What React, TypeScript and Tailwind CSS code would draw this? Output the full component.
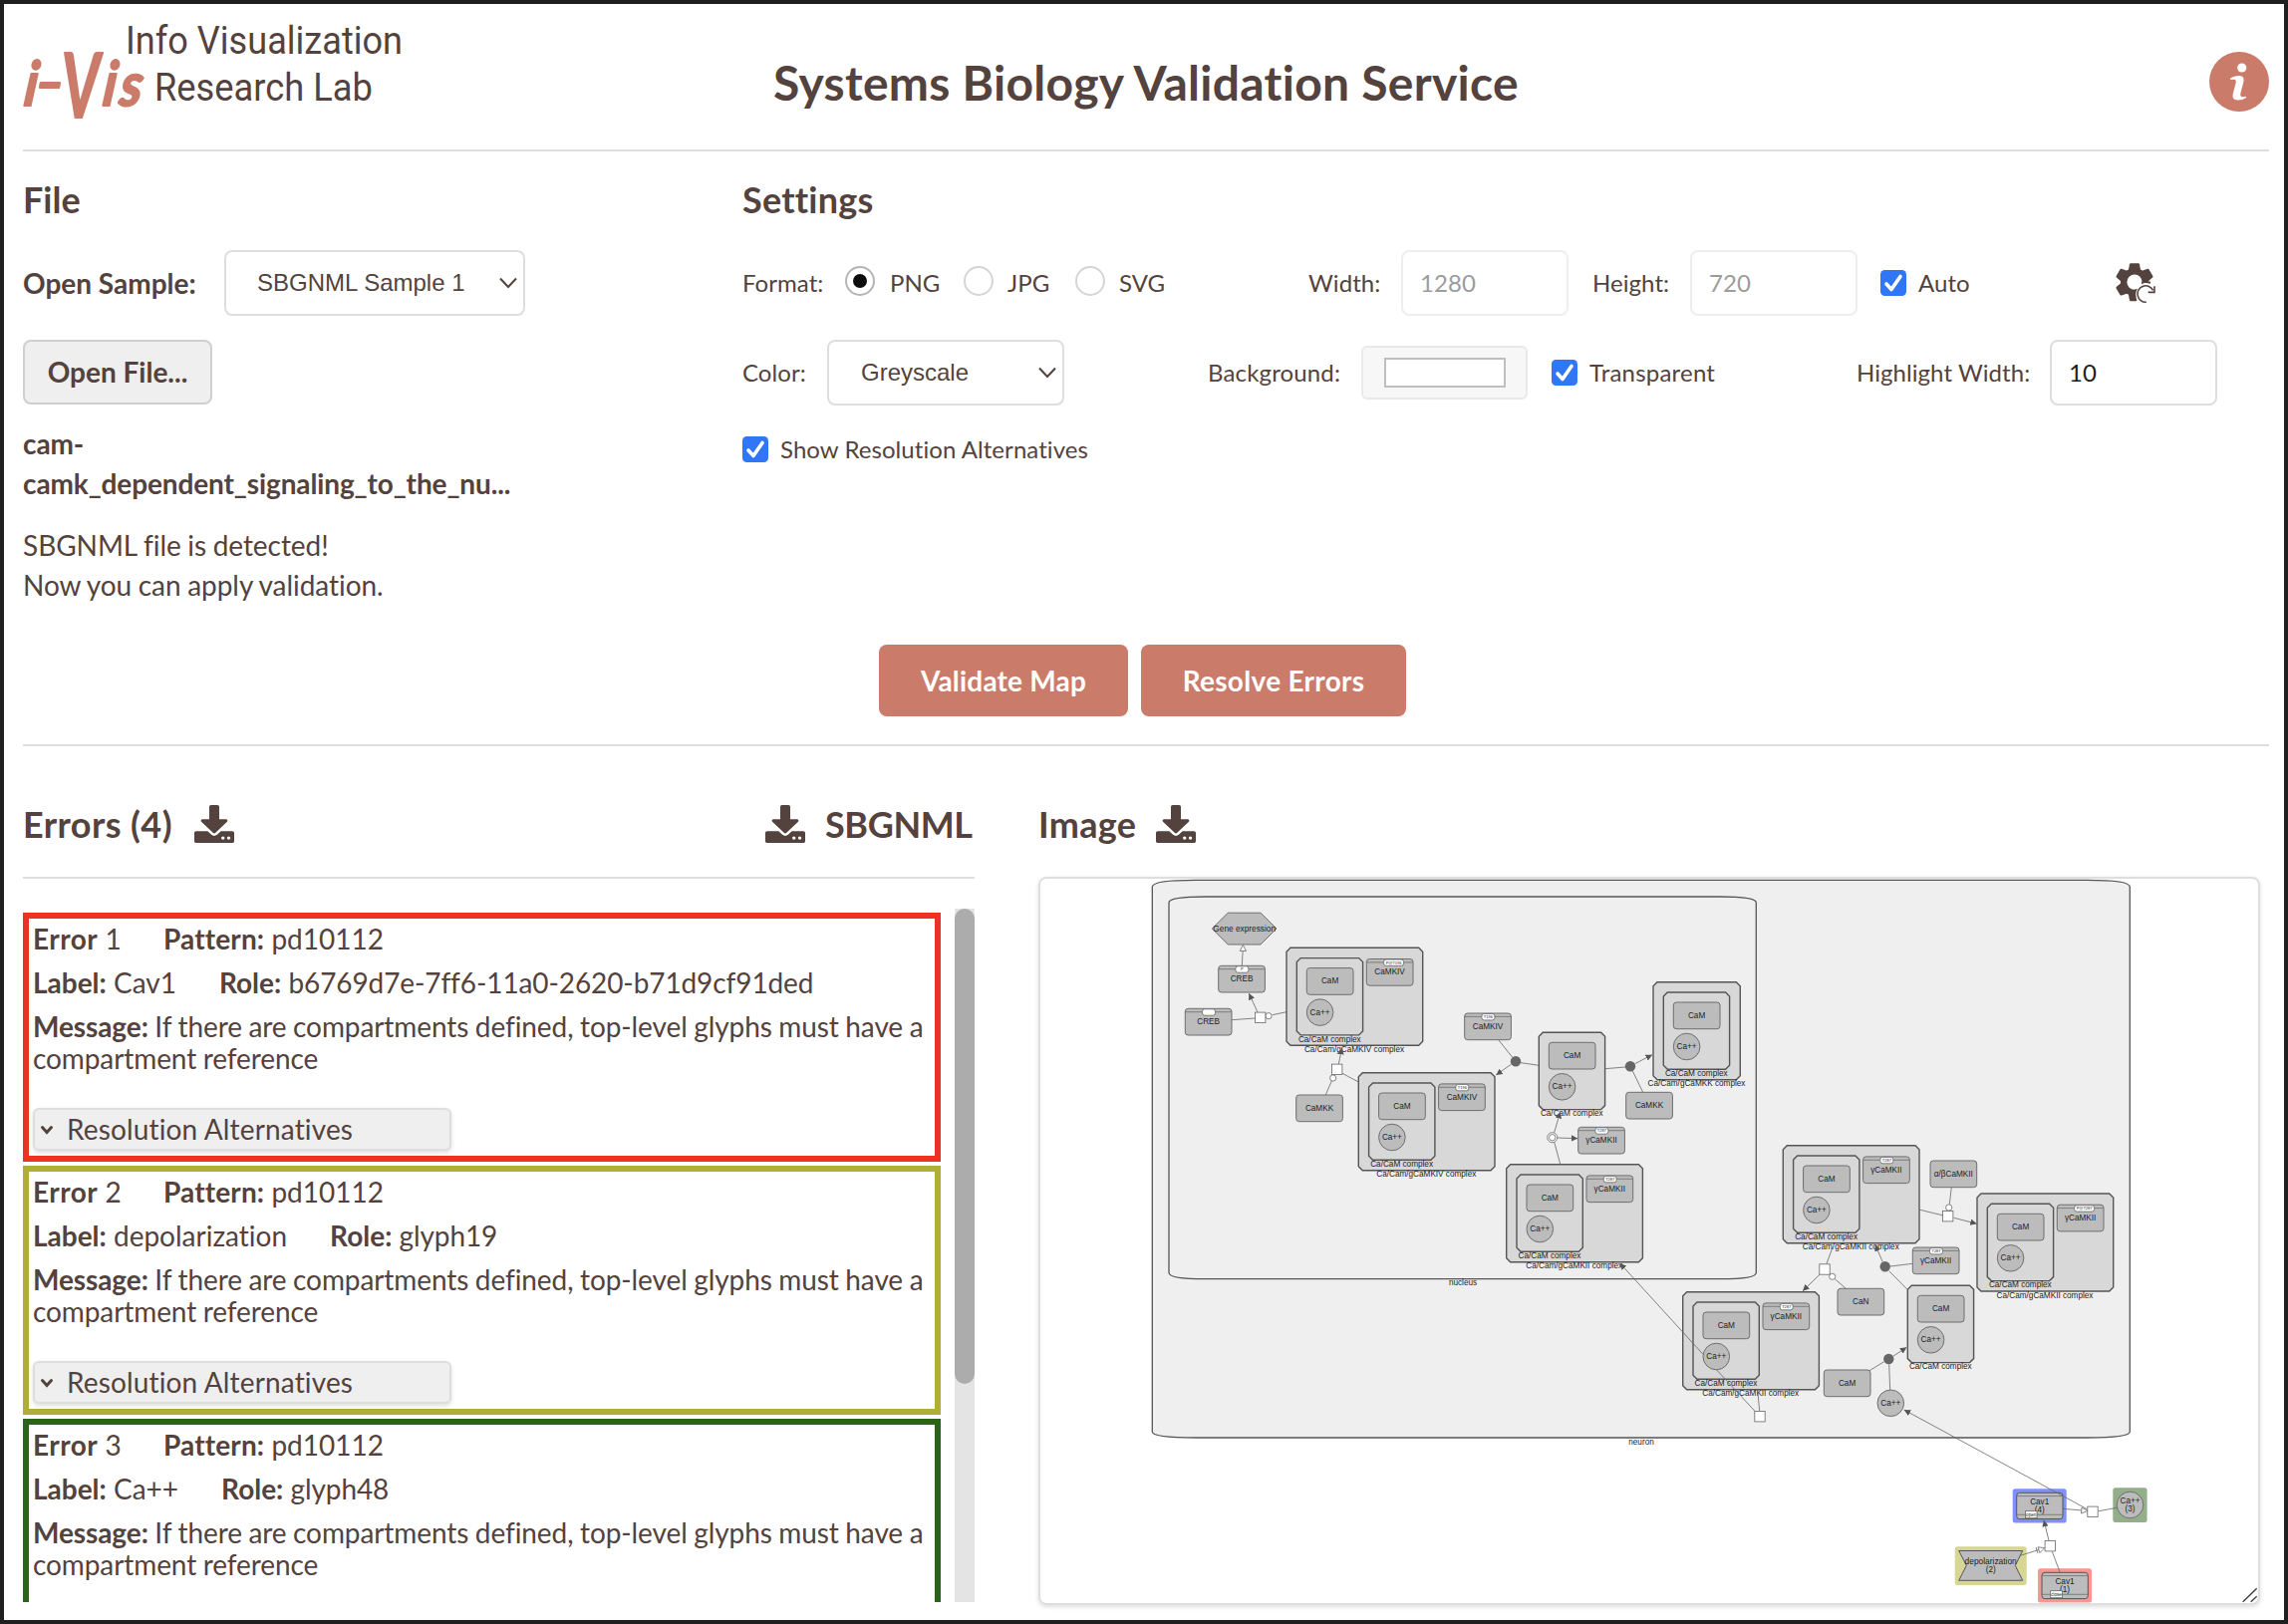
import React from "react";

const ERRORS = [
  { n: 1, label: "Cav1", role: "b6769d7e-7ff6-11a0-2620-b71d9cf91ded", border: "border-[#ea3323]" },
  { n: 2, label: "depolarization", role: "glyph19", border: "border-[#b0ae36]" },
  { n: 3, label: "Ca++", role: "glyph48", border: "border-[#2b6419]" },
];

function Logo() {
  return (
    <svg width="400" height="110" viewBox="20 16 400 110" className="block">
      <g fill="#53423d" fontFamily="Roboto, sans-serif" fontSize="38">
        <text x="126" y="53.5" textLength="278" lengthAdjust="spacingAndGlyphs">Info Visualization</text>
        <text x="155" y="101" textLength="219" lengthAdjust="spacingAndGlyphs">Research Lab</text>
      </g>
      <g fill="#ca7b6a" stroke="#ca7b6a" strokeWidth="2.2" strokeLinejoin="round" fontFamily="Lato, sans-serif" fontStyle="italic" fontWeight="700">
        <text transform="translate(23 106) scale(0.85 1) skewX(-8)" fontSize="62">i</text>
        <text transform="translate(37 101) scale(1.5 1)" fontSize="50">-</text>
        <text transform="translate(62 118) scale(0.66 1)" fontSize="89">V</text>
        <text transform="translate(102 106) scale(0.85 1) skewX(-8)" fontSize="62">i</text>
        <text transform="translate(119 106) scale(0.9 1) skewX(-8)" fontSize="60">s</text>
      </g>
    </svg>
  );
}

function InfoIcon() {
  return (
    <svg width="60" height="60" viewBox="0 0 60 60" className="block">
      <circle cx="30" cy="30" r="30" fill="#ca7b6a" />
      <circle cx="32.7" cy="16" r="4.6" fill="#fff" />
      <path
        d="M21 26.7 C23.5 25 27 24 29.8 24 C34 24 35.3 26.6 34.2 31 L31.4 41.5 C30.8 44.2 31.6 45.2 33.6 45.2 L37 44.8 L37 46 C34.5 47.8 31.5 48.6 28.5 48.5 C24.4 48.3 22.8 46 23.8 42 L26.6 31.5 C27.3 28.8 26.6 27.7 24.6 27.7 L21.1 28 Z"
        fill="#fff"
      />
    </svg>
  );
}

function GearIcon() {
  return (
    <svg width="40" height="40" viewBox="0 0 40 40" className="block">
      <g fill="#53423d">
        <circle cx="19" cy="19.2" r="14" />
        {[0, 60, 120, 180, 240, 300].map((a) => (
          <path key={a} d="M14 1.2 Q14.2 0.2 15.2 0.2 H22.8 Q23.8 0.2 24 1.2 L25.2 7.5 H12.8 Z" transform={`rotate(${a} 19 19.2)`} />
        ))}
      </g>
      <circle cx="19" cy="19.2" r="7.6" fill="#fff" />
      <path d="M19 19.2 L40 20 V40 H21 Z" fill="#fff" />
      <g fill="#53423d">
        <path d="M26.2 18.4 H35.2 L34.6 21 C32 19.6 28.6 19.6 26 21.4 Z" />
        <path d="M18.6 26.8 L22 25.8 C19.6 29.4 19.4 34 21.4 37.8 H18 Z" />
      </g>
      <path d="M30.8 39.2 A8.2 8.2 0 1 1 37.6 27.4" fill="none" stroke="#53423d" strokeWidth="1.5" />
      <path d="M39 23.2 V29.4 H32.6" fill="none" stroke="#53423d" strokeWidth="1.6" />
    </svg>
  );
}

function DownloadIcon() {
  return (
    <svg width="40" height="38" viewBox="0 0 512 512" preserveAspectRatio="none" className="block shrink-0">
      <path
        fill="#53423d"
        d="M216 0h80c13.3 0 24 10.7 24 24v168h87.7c17.8 0 26.7 21.5 14.1 34.1L269.7 378.3c-7.5 7.5-19.8 7.5-27.3 0L90.1 226.1c-12.6-12.6-3.7-34.1 14.1-34.1H192V24c0-13.3 10.7-24 24-24zm296 376v112c0 13.3-10.7 24-24 24H24c-13.3 0-24-10.7-24-24V376c0-13.3 10.7-24 24-24h146.7l49 49c20.1 20.1 52.5 20.1 72.6 0l49-49H488c13.3 0 24 10.7 24 24z"
      />
      <circle cx="368" cy="446" r="22" fill="#fff" />
      <circle cx="442" cy="446" r="22" fill="#fff" />
    </svg>
  );
}

function Select({ value, width, pad }: { value: string; width: string; pad: string }) {
  return (
    <div className={`flex h-[66px] shrink-0 items-center justify-between rounded-lg border-2 border-[#dededf] bg-white pr-[5px] ${width} ${pad}`}>
      <span className="font-['Liberation_Sans',sans-serif] text-[24px] leading-none tracking-normal whitespace-nowrap">{value}</span>
      <svg width="20" height="12" viewBox="0 0 20 12">
        <path d="M2 1.5 L10 10 L18 1.5" fill="none" stroke="#53423d" strokeWidth="2" />
      </svg>
    </div>
  );
}

function Checkbox({ gap = "" }: { gap?: string }) {
  return (
    <svg width="26" height="26" viewBox="0 0 26 26" className={`block shrink-0 ${gap}`}>
      <rect width="26" height="26" rx="4.5" fill="#2f77f6" />
      <path d="M6 14 L11 19.5 L20 6.5" fill="none" stroke="#fff" strokeWidth="3.6" strokeLinecap="round" strokeLinejoin="round" />
    </svg>
  );
}

function Radio({ on = false }: { on?: boolean }) {
  return (
    <span className={`mb-1 flex size-[30px] shrink-0 items-center justify-center rounded-full border-2 bg-white ${on ? "border-[#b5b5b6]" : "border-[#d5d5d6]"}`}>
      {on && <span className="size-[14px] rounded-full bg-[#0c0c0c]" />}
    </span>
  );
}

function Field({ value, disabled = false }: { value: string; disabled?: boolean }) {
  return (
    <div className={`flex h-[66px] w-[168px] shrink-0 items-center rounded-lg border-2 pl-[17px] ${disabled ? "border-[#eeeeef] text-[#9c9c9c]" : "border-[#dededf] text-[#1c1c1c]"}`}>
      {value}
    </div>
  );
}

function ErrorCard({ n, label, role, border }: (typeof ERRORS)[number]) {
  return (
    <div className={`h-[250px] w-[921px] shrink-0 border-6 px-1 pt-1 text-[28px] leading-8 ${border}`}>
      <p className="flex whitespace-nowrap">
        <span className="w-[131px]"><b className="tracking-[0.5px]">Error</b> {n}</span>
        <span><b className="tracking-[0.15px]">Pattern:</b> pd10112</span>
      </p>
      <p className="mt-3 flex gap-[43px] whitespace-nowrap">
        <span><b>Label:</b> {label}</span>
        <span><b>Role:</b> <span className="tracking-[-0.1px]">{role}</span></span>
      </p>
      <p className="mt-3 tracking-[-0.09px] [word-spacing:-0.5px]">
        <b>Message:</b> If there are compartments defined, top-level glyphs must have a<br />compartment reference
      </p>
      <div className="mt-[34px] flex h-[43px] w-[420px] items-center rounded-md border-2 border-[#dededf] bg-[#efefef] pl-[5px] shadow-[0_2px_4px_rgba(34,36,38,0.15)]">
        <svg width="14" height="12" viewBox="0 0 14 12">
          <path d="M2.5 3.5 L7 8.5 L11.5 3.5" fill="none" stroke="#53423d" strokeWidth="3" strokeLinecap="round" />
        </svg>
        <span className="ml-[13px] pb-px tracking-[0.15px]">Resolution Alternatives</span>
      </div>
    </div>
  );
}

/* ---------- Pathway map ---------- */

const STROKE = "#555";

function T({ x, y, s = 8.2, children }: { x: number; y: number; s?: number; children: React.ReactNode }) {
  return (
    <text x={x} y={y + s * 0.35} fontSize={s} textAnchor="middle" fill="#1c1c1c">
      {children}
    </text>
  );
}

function Macro({ x, y, name, tag, tagW = 13, tagX = 23.7 }: { x: number; y: number; name: string; tag?: string; tagW?: number; tagX?: number }) {
  return (
    <g>
      <rect x={x} y={y} width="46.7" height="26.7" rx="3" fill="#bcbcbc" stroke="#6e6e6e" strokeWidth="1" />
      {tag !== undefined && <path d={`M${x} ${y + 3.4} h46.7`} stroke="#6e6e6e" strokeWidth="0.8" />}
      <T x={x + 23.3} y={y + 13}>{name}</T>
      {tag !== undefined && (
        <>
          <rect x={x + tagX - tagW / 2} y={y + 0.5} width={tagW} height="6.4" rx="2.4" fill="#fff" stroke="#666" strokeWidth="0.8" />
          <T x={x + tagX} y={y + 3.7} s={4}>{tag}</T>
        </>
      )}
    </g>
  );
}

function Calcium({ x, y }: { x: number; y: number }) {
  return (
    <g>
      <circle cx={x} cy={y} r="13.3" fill="#bcbcbc" stroke="#6e6e6e" strokeWidth="1" />
      <T x={x} y={y - 0.3}>Ca++</T>
    </g>
  );
}

function cutBox(x: number, y: number, w: number, h: number) {
  const c = 4;
  return `M${x + c} ${y} H${x + w - c} L${x + w} ${y + c} V${y + h - c} L${x + w - c} ${y + h} H${x + c} L${x} ${y + h - c} V${y + c} Z`;
}

function CaCaM({ x, y }: { x: number; y: number }) {
  return (
    <g>
      <path d={cutBox(x, y, 66.3, 77.3)} fill="#d8d8d8" stroke={STROKE} strokeWidth="1.4" />
      <Macro x={x + 10} y={y + 10} name="CaM" />
      <Calcium x={x + 23.3} y={y + 54.5} />
      <T x={x + 33} y={y + 81.3}>Ca/CaM complex</T>
    </g>
  );
}

function BigComplex({ x, y, kinase, tag, tagW, tagX }: { x: number; y: number; kinase: string; tag: string; tagW?: number; tagX?: number }) {
  return (
    <g>
      <path d={cutBox(x, y, 136.7, 98)} fill="#d8d8d8" stroke={STROKE} strokeWidth="1.4" />
      <CaCaM x={x + 10.3} y={y + 10.3} />
      <Macro x={x + 80.3} y={y + 11.2} name={kinase} tag={tag} tagW={tagW} tagX={tagX} />
      <T x={x + 68} y={y + 101.7}>{`Ca/Cam/g${kinase.replace("γ", "")} complex`}</T>
    </g>
  );
}

const LINES: number[][] = [
  [1246.3, 969.3, 1247.1, 955], [1236, 1023.7, 1259.3, 1022], [1276.7, 1018.7, 1291, 1015.7],
  [1347, 1077.3, 1363.3, 1086], [1336.3, 1085, 1330.3, 1099], [1503.7, 1043.7, 1517.5, 1061],
  [1526, 1066.7, 1544.3, 1069.3], [1610.7, 1072.7, 1631, 1071], [1638.3, 1075, 1648.7, 1096.3],
  [1559.7, 1146.3, 1565.7, 1168.3], [1761.3, 1416.7, 1722.7, 1375], [1765.7, 1416, 1763.7, 1395.3],
  [1839, 1252, 1833, 1268.3], [1841.3, 1283.7, 1852.3, 1293.3], [1926.7, 1214.3, 1949, 1219.7],
  [1956.3, 1208.7, 1958.3, 1191.7], [1897, 1271, 1919.3, 1268.3], [1895.7, 1275.7, 1914, 1294.3],
  [1890.7, 1366.7, 1876, 1375.7], [1895.7, 1369.3, 1896.7, 1395], [2070, 1514.3, 2089, 1516],
  [2105.7, 1516.7, 2124.3, 1513.3], [2059.3, 1557.3, 2067, 1577.7], [2027.3, 1561.3, 2046, 1555.5],
];

const ARROWS: number[][] = [
  [1262, 1016, 1253.3, 997], [1343.3, 1068, 1346.7, 1051.7], [1516.7, 1068, 1501.3, 1079],
  [1640.7, 1067.7, 1658, 1058.7], [1559.7, 1136.7, 1565.7, 1116], [1562.7, 1142, 1583.3, 1142.7],
  [1709, 1359.3, 1625.7, 1268], [1826, 1279.3, 1809, 1295.7], [1960.7, 1222.3, 1983.7, 1228.3],
  [1889.3, 1266.7, 1881.7, 1249.3], [1899.7, 1361.3, 1913.3, 1352.3], [2094.3, 1514.7, 1910.7, 1415],
  [2056, 1546.3, 2051, 1525.7],
];

const SQUARES = [[1264.7, 1021.3], [1341.7, 1073.3], [1954.7, 1220.7], [1831, 1274], [1766, 1421.7], [2100, 1517.3], [2057.3, 1551.7]];
const CATALYSIS = [[1273, 1019.7], [1337.7, 1082], [1955.7, 1212], [1838.7, 1281.3]];
const ASSOCIATIONS = [[1521, 1065.3], [1636, 1070.3], [1891.7, 1271.3], [1895.3, 1364]];

function Channel({ x, y, n, state, glow }: { x: number; y: number; n: number; state: string; glow: string }) {
  return (
    <g>
      <rect x={x} y={y} width="54" height="34.3" rx="2.5" fill={glow} />
      <rect x={x + 4} y={y + 4} width="46.3" height="26.3" rx="3" fill="#bcbcbc" stroke="#555" strokeWidth="1" />
      <path d={`M${x + 4} ${y + 7.3} h46.3 M${x + 4} ${y + 26} h46.3`} stroke="#6e6e6e" strokeWidth="0.8" />
      <T x={x + 27} y={y + 13}>Cav1</T>
      <T x={x + 27} y={y + 21.2}>({n})</T>
      <rect x={x + 12.7} y={y + 22.4} width="11.7" height="7" fill="#fff" stroke="#666" strokeWidth="0.8" />
      <T x={x + 18.5} y={y + 25.6} s={4.6}>{state}</T>
    </g>
  );
}

function PathwayMap() {
  return (
    <svg width="1222" height="727" viewBox="1044 882 1222 727" className="block" fontFamily="'Liberation Sans', sans-serif">
      <defs>
        <marker id="arrow" viewBox="0 0 6 6" refX="6" refY="3" markerWidth="6.5" markerHeight="6.5" orient="auto" markerUnits="userSpaceOnUse">
          <path d="M0 0 L6 3 L0 6 Z" fill="#555" />
        </marker>
      </defs>
      <path d="M1156.3 890 Q1156.3 883.3 1200 883.3 H2094 Q2137.3 883.3 2137.3 890 V1437 Q2137.3 1443 2094 1443 H1200 Q1156.3 1443 1156.3 1437 Z" fill="#efefef" stroke={STROKE} strokeWidth="1.3" />
      <path d="M1173 906 Q1173 900 1210 900 H1726 Q1762.3 900 1762.3 906 V1277.5 Q1762.3 1283.7 1726 1283.7 H1210 Q1173 1283.7 1173 1277.5 Z" fill="#efefef" stroke={STROKE} strokeWidth="1.3" />
      <T x={1468} y={1287.6}>nucleus</T>
      <T x={1647} y={1447}>neuron</T>

      <path d="M1216.3 932 L1232.3 916.2 H1265 L1281 932 L1265 948 H1232.3 Z" fill="#bcbcbc" stroke="#6e6e6e" />
      <T x={1248.7} y={931.8} s={8.3}>Gene expression</T>
      <Macro x={1222.7} y={969.3} name="CREB" tag="P" />
      <Macro x={1189.3} y={1012.3} name="CREB" tag="" />
      <Macro x={1469.7} y={1017} name="CaMKIV" tag="T196" />
      <Macro x={1300.7} y={1099} name="CaMKK" />
      <Macro x={1583.7} y={1131.3} name="γCaMKII" tag="T287" />
      <Macro x={1631.7} y={1096.3} name="CaMKK" />
      <Macro x={1937} y={1165} name="α/βCaMKII" />
      <Macro x={1919.3} y={1252} name="γCaMKII" tag="T287" />
      <Macro x={1844} y={1293.3} name="CaN" />
      <Macro x={1830.3} y={1375} name="CaM" />
      <Calcium x={1897.3} y={1408.3} />

      <BigComplex x={1291} y={951.3} kinase="CaMKIV" tag="P@T196" tagW={20} tagX={27.3} />
      <BigComplex x={1363.3} y={1076.7} kinase="CaMKIV" tag="T196" />
      <BigComplex x={1511.7} y={1168.7} kinase="γCaMKII" tag="T287" />
      <BigComplex x={1789.3} y={1149.7} kinase="γCaMKII" tag="T287" />
      <BigComplex x={1984} y={1198} kinase="γCaMKII" tag="P@T287" tagW={20} tagX={27.3} />
      <BigComplex x={1688.7} y={1296.7} kinase="γCaMKII" tag="T287" />
      <CaCaM x={1544.3} y={1036.3} />
      <CaCaM x={1914.3} y={1290.3} />
      <path d={cutBox(1659, 985.7, 87.3, 98)} fill="#d8d8d8" stroke={STROKE} strokeWidth="1.4" />
      <CaCaM x={1669.3} y={996} />
      <T x={1702.5} y={1087.4}>Ca/Cam/gCaMKK complex</T>

      <Channel x={2019.7} y={1494.3} n={4} state="open" glow="#8190f8" />
      <Channel x={2045} y={1574.3} n={1} state="close" glow="#f89790" />
      <rect x="2120.3" y="1493.3" width="34.3" height="34.7" rx="2.5" fill="#93ae8a" />
      <circle cx="2137.5" cy="1510.5" r="13.3" fill="#bcbcbc" stroke="#6e6e6e" />
      <T x={2137.5} y={1506.5}>Ca++</T>
      <T x={2137.5} y={1514.5}>(3)</T>
      <rect x="1961.7" y="1552.3" width="72" height="38.7" rx="2.5" fill="#d7d695" />
      <path d="M1965.7 1556.5 H2029.7 L2022.3 1571.3 L2029.7 1586.3 H1965.7 L1973.3 1571.3 Z" fill="#bcbcbc" stroke="#555" />
      <T x={1997.7} y={1567} s={8.4}>depolarization</T>
      <T x={1997.7} y={1575.2}>(2)</T>

      <g stroke="#666" strokeWidth="0.8">
        {LINES.map(([a, b, c, d], i) => (
          <line key={i} x1={a} y1={b} x2={c} y2={d} />
        ))}
        {ARROWS.map(([a, b, c, d], i) => (
          <line key={i} x1={a} y1={b} x2={c} y2={d} markerEnd="url(#arrow)" />
        ))}
      </g>
      <g fill="#fff" stroke="#666" strokeWidth="0.8">
        <path d="M1247.3 948.5 L1250.5 954.5 H1244.2 Z" />
        <path d="M2095 1516.5 L2088.5 1519 L2089 1513 Z" />
        <path d="M2051.7 1553.7 L2047 1558.5 L2045 1552.8 Z" />
        <path d="M2043 1553 L2045 1559" fill="none" />
        {CATALYSIS.map(([x, y]) => (
          <circle key={x} cx={x} cy={y} r="3.1" />
        ))}
        {SQUARES.map(([x, y]) => (
          <rect key={x} x={x - 5.2} y={y - 5.2} width="10.4" height="10.4" />
        ))}
        <circle cx="1557.7" cy="1141.7" r="5" />
        <circle cx="1557.7" cy="1141.7" r="3.2" />
      </g>
      {ASSOCIATIONS.map(([x, y]) => (
        <circle key={x} cx={x} cy={y} r="5.2" fill="#666" />
      ))}
      <path d="M2250.7 1607.7 L2264.7 1594.3 M2258.7 1607.7 L2264.7 1602.3" stroke="#444" strokeWidth="1.5" />
    </svg>
  );
}

export default function App() {
  return (
    <main className="flex h-[1630px] w-[2296px] flex-col overflow-hidden border-4 border-[#1f1f1f] bg-white pr-[15px] pl-[19px] font-[Lato,sans-serif] text-[#53423d] [font-variant-ligatures:none]">
      <header className="grid h-[148px] shrink-0 grid-cols-[400px_1fr_400px] border-b-2 border-[#dededf]">
        <div className="-ml-[3px] pt-3"><Logo /></div>
        <h1 className="pt-[55px] text-center text-[48px] leading-[48px] font-bold tracking-[0.28px] whitespace-nowrap">Systems Biology Validation Service</h1>
        <div className="flex justify-end pt-12"><InfoIcon /></div>
      </header>

      <div className="flex h-[495px] shrink-0">
        <section className="w-[722px] pt-6 text-[28px] leading-10">
          <h2 className="text-[36px] leading-[48px] font-bold">File</h2>
          <div className="mt-[27px] flex h-[66px] items-center">
            <b className="w-[202px]">Open Sample:</b>
            <Select value="SBGNML Sample 1" width="w-[302px]" pad="pl-[31px]" />
          </div>
          <button className="mt-6 flex h-[65px] w-[190px] items-center justify-center rounded-lg border-2 border-[#cfcfd0] bg-[#efefef] pb-px font-bold">Open File...</button>
          <p className="mt-[19px] font-bold tracking-[-0.12px]">cam-<br />camk_dependent_signaling_to_the_nu...</p>
          <p className="mt-[22px] tracking-[-0.05px] [word-spacing:-0.5px]">SBGNML file is detected!<br />Now you can apply validation.</p>
        </section>

        <section className="flex-1 pt-6 text-[24px] leading-8 tracking-[0.06px] whitespace-nowrap">
          <h2 className="text-[36px] leading-[48px] font-bold tracking-[0.2px]">Settings</h2>
          <div className="mt-[27px] flex h-[66px] items-center">
            <span className="w-[103px]">Format:</span>
            <Radio on /><span className="ml-[15px] w-[74px]">PNG</span>
            <Radio /><span className="ml-[14px] w-[68px]">JPG</span>
            <Radio /><span className="ml-[14px] w-[190px]">SVG</span>
            <span className="w-[93px]">Width:</span>
            <Field value="1280" disabled />
            <span className="ml-6 w-[98px]">Height:</span>
            <Field value="720" disabled />
            <Checkbox gap="ml-[23px]" /><span className="ml-3 w-[198px]">Auto</span>
            <GearIcon />
          </div>
          <div className="mt-6 flex h-[66px] items-center">
            <span className="w-[85px]">Color:</span>
            <Select value="Greyscale" width="w-[238px]" pad="pl-[32px]" />
            <span className="ml-[144px] w-[154px] tracking-[0.15px]">Background:</span>
            <div className="flex h-[54px] w-[167px] items-center justify-center rounded-md border-2 border-[#e9e9e9] bg-[#f7f7f7]">
              <span className="h-[30px] w-[122px] border-2 border-[#bfbfbf] bg-white" />
            </div>
            <Checkbox gap="ml-6" /><span className="ml-3 w-[268px] tracking-[0.2px]">Transparent</span>
            <span className="w-[194px]">Highlight Width:</span>
            <Field value="10" />
          </div>
          <div className="mt-7 flex items-center">
            <Checkbox /><span className="ml-3">Show Resolution Alternatives</span>
          </div>
        </section>
      </div>

      <div className="flex h-[102px] shrink-0 gap-[13px] border-b-2 border-[#dededf] pl-[859px] text-[28px] font-bold text-white">
        <button className="h-[72px] w-[250px] rounded-lg bg-[#ca7b6a] tracking-[0.2px]">Validate Map</button>
        <button className="h-[72px] w-[266px] rounded-lg bg-[#ca7b6a] tracking-[0.3px]">Resolve Errors</button>
      </div>

      <div className="flex gap-16 pt-[54px]">
        <section className="w-[955px] shrink-0">
          <div className="flex h-[79px] border-b-2 border-[#dededf]">
            <h2 className="w-[172px] text-[36px] leading-[48px] font-bold tracking-[0.4px] whitespace-nowrap">Errors (4)</h2>
            <div className="mt-[5px]"><DownloadIcon /></div>
            <div className="mt-[5px] mr-5 ml-auto"><DownloadIcon /></div>
            <h2 className="w-[150px] text-[36px] leading-[48px] font-bold tracking-[-0.4px]">SBGNML</h2>
          </div>
          <div className="mt-[30px] flex h-[696px] justify-between overflow-hidden">
            <div className="flex flex-col gap-1 pt-1">
              {ERRORS.map((e) => (
                <ErrorCard key={e.n} {...e} />
              ))}
            </div>
            <div className="w-5 bg-[#e4e4e4]">
              <div className="h-[477px] rounded-full bg-[#acacac]" />
            </div>
          </div>
        </section>

        <section className="w-[1226px] shrink-0">
          <div className="flex h-[77px]">
            <h2 className="w-[118px] text-[36px] leading-[48px] font-bold tracking-[0.3px]">Image</h2>
            <div className="mt-[5px]"><DownloadIcon /></div>
          </div>
          <div className="h-[731px] overflow-hidden rounded-lg border-2 border-[#dededf] shadow-[0_2px_4px_rgba(34,36,38,0.15)]">
            <PathwayMap />
          </div>
        </section>
      </div>
    </main>
  );
}
